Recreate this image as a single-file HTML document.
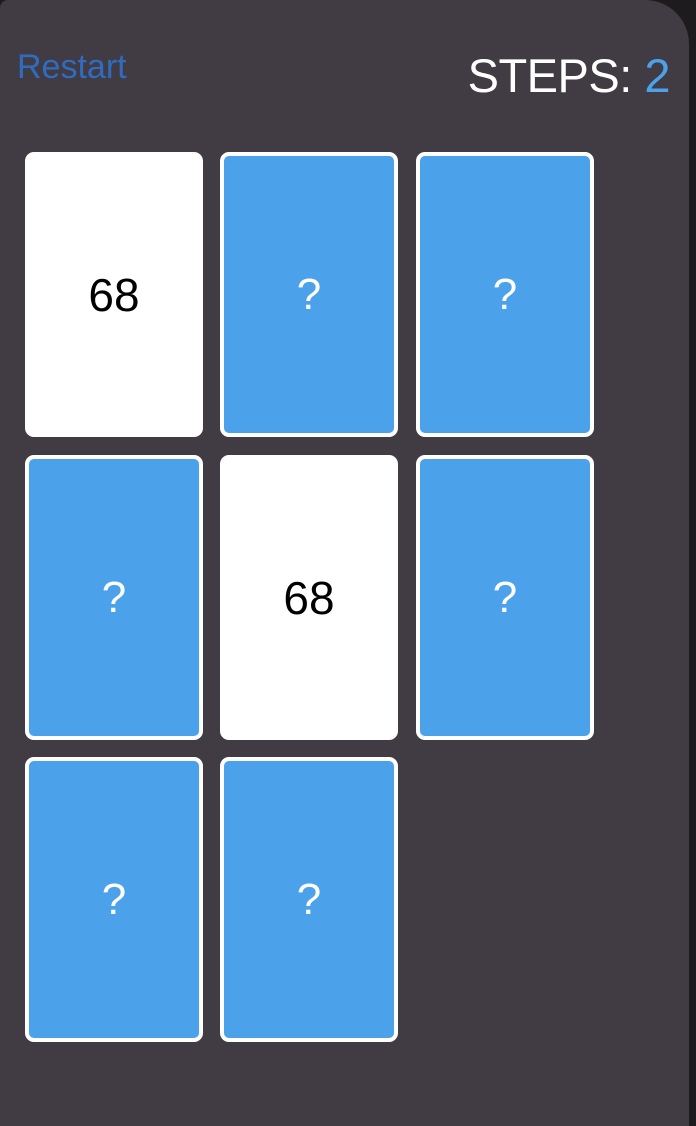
<!DOCTYPE html>
<html><head><meta charset="utf-8"><style>
html,body{margin:0;padding:0;width:696px;height:1126px;background:#1d1b1e;overflow:hidden;font-family:"Liberation Sans",sans-serif}
.panel{position:absolute;left:0;top:0;width:689px;height:1126px;background:#413c43;border-top-right-radius:44px;border-top-left-radius:8px}
.restart{position:absolute;left:17px;top:48px;font-size:34px;color:#2f6cc0;letter-spacing:0}
.steps{position:absolute;right:19px;top:48px;font-size:47px;color:#fff;letter-spacing:-0.5px}
.steps span{color:#4ba1ea}
.card{position:absolute;width:178px;height:285px;box-sizing:border-box;border-radius:9px;border:4px solid #fff;background:#4ba1ea;color:#fff;font-size:44px;display:flex;align-items:center;justify-content:center}
.card.up{background:#fff;color:#000;font-size:46px}
</style></head><body>
<div class="panel">
<div class="restart">Restart</div>
<div class="steps">STEPS: <span>2</span></div>
<div class="card up" style="left:25px;top:152px">68</div>
<div class="card" style="left:220px;top:152px">?</div>
<div class="card" style="left:416px;top:152px">?</div>
<div class="card" style="left:25px;top:455px">?</div>
<div class="card up" style="left:220px;top:455px">68</div>
<div class="card" style="left:416px;top:455px">?</div>
<div class="card" style="left:25px;top:757px">?</div>
<div class="card" style="left:220px;top:757px">?</div>
</div>
</body></html>
